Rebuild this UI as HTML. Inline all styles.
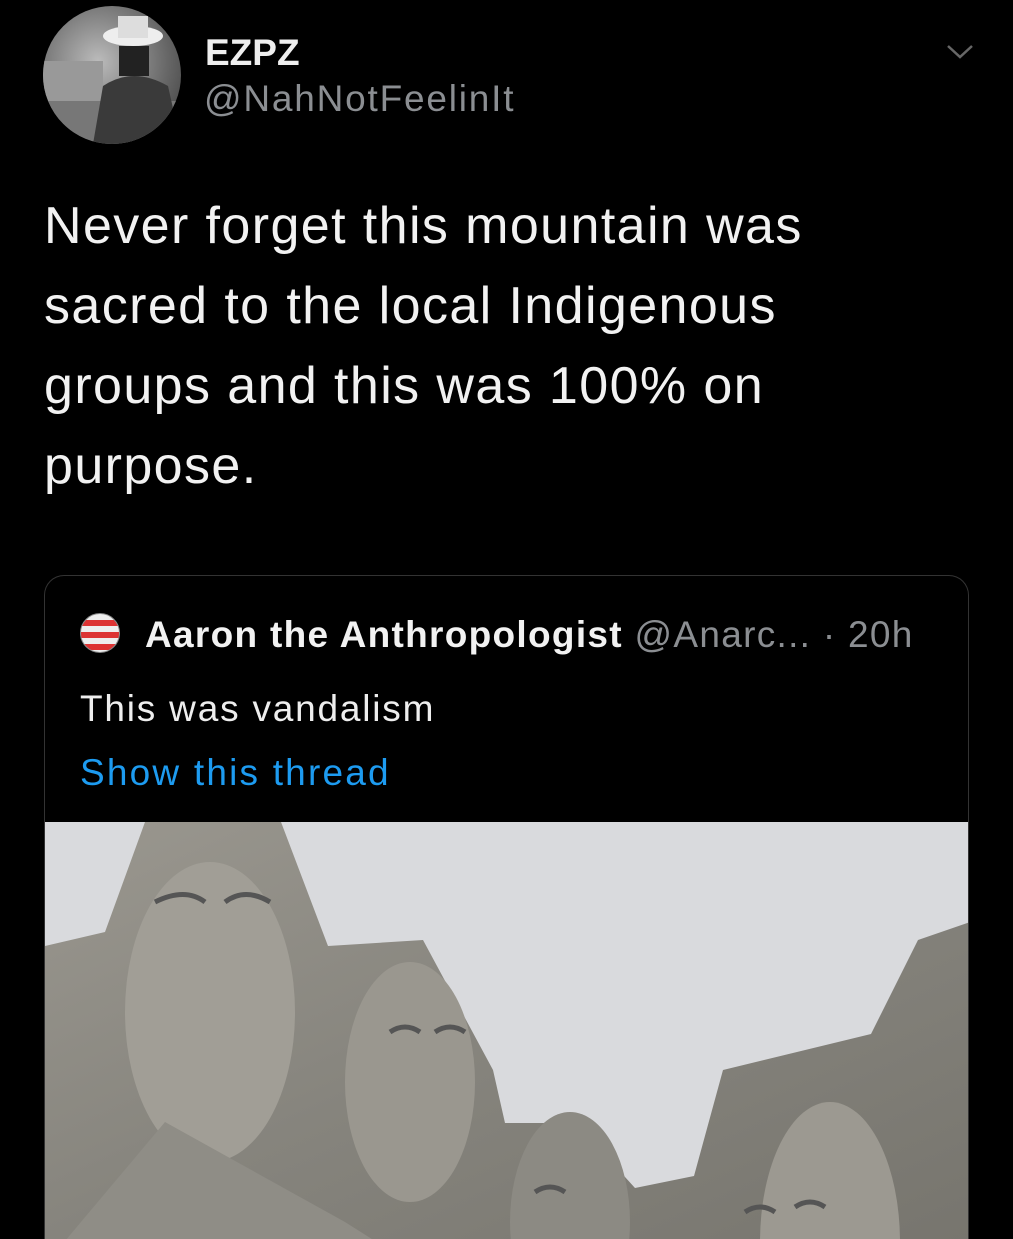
<!DOCTYPE html>
<html><head><meta charset="utf-8"><style>
html,body{margin:0;padding:0;background:#000;width:1013px;height:1239px;overflow:hidden;font-family:"Liberation Sans",Arial,sans-serif;color:#fff}
.abs{position:absolute}
</style></head><body>
<div class="abs" style="left:43px;top:6px;width:138px;height:138px;border-radius:50%;overflow:hidden;background:radial-gradient(circle at 40% 40%,#bbb,#666 60%,#333)">
<svg width="138" height="138" viewBox="0 0 138 138"><rect x="0" y="55" width="60" height="40" fill="#999"/><rect x="0" y="95" width="138" height="43" fill="#777"/><ellipse cx="90" cy="30" rx="30" ry="10" fill="#eee"/><rect x="75" y="10" width="30" height="22" fill="#ddd"/><rect x="76" y="40" width="30" height="30" fill="#222"/><path d="M50 138 L60 80 Q90 60 125 80 L138 138Z" fill="#3a3a3a"/></svg></div>
<div class="abs" style="left:205px;top:32px;font-size:37px;font-weight:bold;color:#eee">EZPZ</div>
<div class="abs" style="left:204px;top:78px;font-size:37px;letter-spacing:1.8px;color:#8b8e92">@NahNotFeelinIt</div>
<svg class="abs" style="left:944px;top:42px" width="32" height="20"><path d="M4 4 L16 15 L28 4" stroke="#666" stroke-width="2.5" fill="none"/></svg>
<div class="abs" style="left:44px;top:186px;font-size:52px;letter-spacing:1.4px;line-height:80px;color:#f2f2f2;width:960px;white-space:nowrap">Never forget this mountain was<br>sacred to the local Indigenous<br>groups and this was 100% on<br>purpose.</div>
<div class="abs" style="left:44px;top:575px;width:923px;height:663px;border:1px solid #333;border-bottom:none;border-radius:20px 20px 0 0;overflow:hidden">
<div class="abs" style="left:35px;top:37px;width:38px;height:38px;border-radius:50%;background:repeating-linear-gradient(180deg,#eee 0 6px,#d33 6px 12px);border:1px solid #888"></div>
<div class="abs" style="left:100px;top:38px;font-size:37px;letter-spacing:1.3px;white-space:nowrap"><b style="color:#f2f2f2">Aaron the Anthropologist</b> <span style="color:#8b8e92">@Anarc... · 20h</span></div>
<div class="abs" style="left:35px;top:112px;font-size:37px;letter-spacing:1.8px;color:#eee">This was vandalism</div>
<div class="abs" style="left:35px;top:176px;font-size:37px;letter-spacing:2.2px;color:#1d9bf0">Show this thread</div>
<svg class="abs" style="left:0;top:246px" width="925" height="419" viewBox="0 0 925 419">
<defs><linearGradient id="r" x1="0" y1="0" x2="1" y2="1"><stop offset="0" stop-color="#9a978f"/><stop offset=".5" stop-color="#86847d"/><stop offset="1" stop-color="#77756e"/></linearGradient></defs>
<rect width="925" height="419" fill="#d9dadd"/>
<path d="M0 124 L60 110 L100 0 L236 0 L283 124 L378 118 L448 248 L460 301 L531 301 L590 366 L649 354 L678 248 L826 212 L873 118 L925 100 L925 419 L0 419Z" fill="url(#r)"/>
<ellipse cx="165" cy="190" rx="85" ry="150" fill="#a19e96"/>
<ellipse cx="365" cy="260" rx="65" ry="120" fill="#9a978f"/>
<ellipse cx="525" cy="400" rx="60" ry="110" fill="#8c8a83"/>
<ellipse cx="785" cy="420" rx="70" ry="140" fill="#9c9991"/>
<path d="M110 80 Q140 65 160 80 M180 80 Q200 65 225 80 M345 210 Q360 200 375 210 M390 210 Q405 200 420 210 M490 370 Q505 360 520 370 M700 390 Q715 380 730 390 M750 385 Q765 375 780 385" stroke="#555" stroke-width="5" fill="none"/>
<path d="M20 419 L120 300 L300 400 L330 419Z" fill="#8f8d86"/>
</svg>
</div>
</body></html>
